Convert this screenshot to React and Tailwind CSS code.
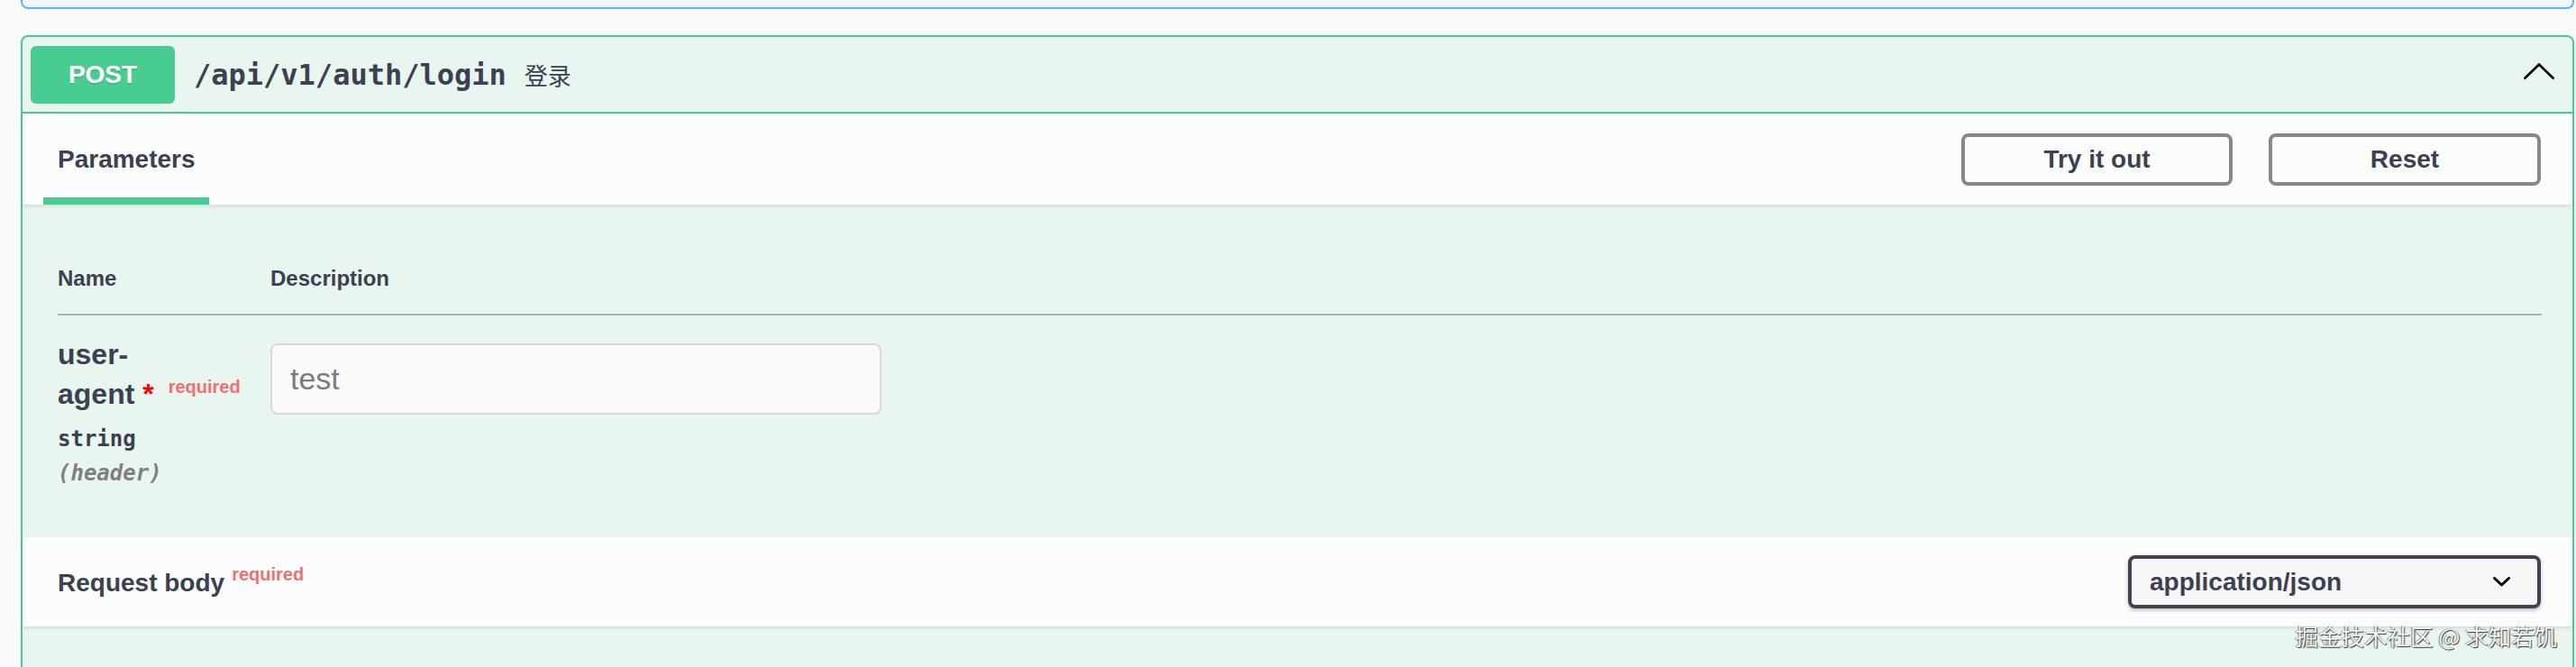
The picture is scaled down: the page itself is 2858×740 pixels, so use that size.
import React from "react";

const sans = "font-['Liberation_Sans','Helvetica',Arial,sans-serif]";
const mono = "font-['DejaVu_Sans_Mono','Liberation_Mono',monospace]";
const cjk = "font-['Noto_Sans_CJK_SC','Noto_Sans',sans-serif]";

function ChevronUp() {
  return (
    <svg width="36" height="19" viewBox="0 0 36 19" className="mb-[6px]">
      <polyline points="1.5,17.5 18,1.5 34.5,17.5" fill="none" stroke="#000" strokeWidth="2.6" />
    </svg>
  );
}

function ChevronDown() {
  return (
    <svg width="19" height="11" viewBox="0 0 19 11">
      <polyline points="1.5,1.5 9.5,9 17.5,1.5" fill="none" stroke="#000" strokeWidth="3" strokeLinecap="round" strokeLinejoin="round" />
    </svg>
  );
}

export default function App() {
  return (
    <div className={`relative w-[2858px] h-[740px] overflow-hidden bg-[#fafafa] text-[#3b4151] ${sans}`}>
      <div className="pl-[23px] pr-[2px]">
        {/* previous operation (collapsed, blue) */}
        <div className="h-[10px] border-2 border-t-0 border-[#61affe] bg-[#eff7ff] rounded-b-[8px]" />

        {/* POST operation */}
        <div className="mt-[29px] border-2 border-[#49cc90] rounded-[8px] bg-[#e9f6f0]">
          {/* summary */}
          <div className="h-[85px] flex items-center pl-[9px] pr-[19px] border-b-2 border-[#49cc90]">
            <div className="w-[160px] h-[64px] rounded-[6px] bg-[#49cc90] text-white text-[28px] font-bold flex items-center justify-center [text-shadow:0_2px_0_rgba(0,0,0,0.1)]">
              POST
            </div>
            <span className={`ml-[21px] text-[32px] font-bold ${mono}`}>/api/v1/auth/login</span>
            <span className={`ml-[20px] text-[26px] ${cjk}`}>登录</span>
            <div className="ml-auto">
              <ChevronUp />
            </div>
          </div>

          {/* tab header */}
          <div className="h-[101px] flex items-center justify-between pl-[39px] pr-[35px] bg-white/80 shadow-[0_2px_4px_rgba(0,0,0,0.1)]">
            <div className="self-end flex flex-col">
              <span className="text-[28px] leading-[32px] font-bold mb-[26px]">Parameters</span>
              <div className="w-[184px] h-[8px] -ml-[16px] bg-[#49cc90]" />
            </div>
            <div className="flex gap-[40px]">
              <button className="w-[301px] h-[58px] border-4 border-[#888] rounded-[8px] bg-transparent text-[28px] font-bold text-[#3b4151]">
                Try it out
              </button>
              <button className="w-[302px] h-[58px] border-4 border-[#888] rounded-[8px] bg-transparent text-[28px] font-bold text-[#3b4151]">
                Reset
              </button>
            </div>
          </div>

          {/* parameters table */}
          <div className="h-[369px] pl-[39px] pr-[34px]">
            <div className="flex pt-[68px] pb-[25px] border-b-2 border-[#a7b4ae] text-[24px] leading-[28px] font-bold">
              <div className="w-[236px]">Name</div>
              <div>Description</div>
            </div>
            <div className="flex pt-[21px]">
              <div className="w-[236px] flex flex-col">
                <div className="text-[32px] leading-[44px] font-bold">
                  user-
                  <br />
                  agent
                  <span className="text-[#f00]">&nbsp;*</span>
                  <span className="relative -top-[12px] pl-[16px] text-[20px] text-[#f36f6f]">required</span>
                </div>
                <div className={`mt-[10px] text-[24px] leading-[28px] font-bold ${mono}`}>string</div>
                <div className={`mt-[10px] text-[24px] leading-[28px] font-bold italic text-[#808080] ${mono}`}>
                  (header)
                </div>
              </div>
              <div>
                <input
                  type="text"
                  placeholder="test"
                  className={`mt-[10px] w-[678px] h-[79px] px-[20px] border-2 border-[#d9d9d9] rounded-[8px] bg-[#fafafa] text-[34px] outline-none placeholder:text-[#7b7b7b] ${sans}`}
                />
              </div>
            </div>
          </div>

          {/* request body */}
          <div className="h-[99px] flex items-center justify-between pl-[39px] pr-[35px] bg-white/80 shadow-[0_2px_4px_rgba(0,0,0,0.1)]">
            <div className="mt-[4px] text-[28px] leading-[32px] font-bold">
              Request body
              <span className="relative -top-[12px] pl-[8px] text-[20px] text-[#f36f6f]">required</span>
            </div>
            <div className="w-[458px] h-[59px] flex items-center justify-between pl-[20px] pr-[30px] border-4 border-[#41444e] rounded-[8px] bg-[#f7f7f7] shadow-[0_2px_4px_rgba(0,0,0,0.25)]">
              <span className="text-[28px] font-bold">application/json</span>
              <ChevronDown />
            </div>
          </div>
          <div className="h-[60px]" />
        </div>
      </div>

      {/* watermark */}
      <div
        className={`absolute right-[21px] top-[691px] text-[25.5px] leading-[28px] text-[#f2f2f2] ${cjk} [text-shadow:1px_1px_1px_rgba(0,0,0,0.75),-1px_0_1px_rgba(0,0,0,0.45)]`}
      >
        掘金技术社区 @ 求知若饥
      </div>
    </div>
  );
}
